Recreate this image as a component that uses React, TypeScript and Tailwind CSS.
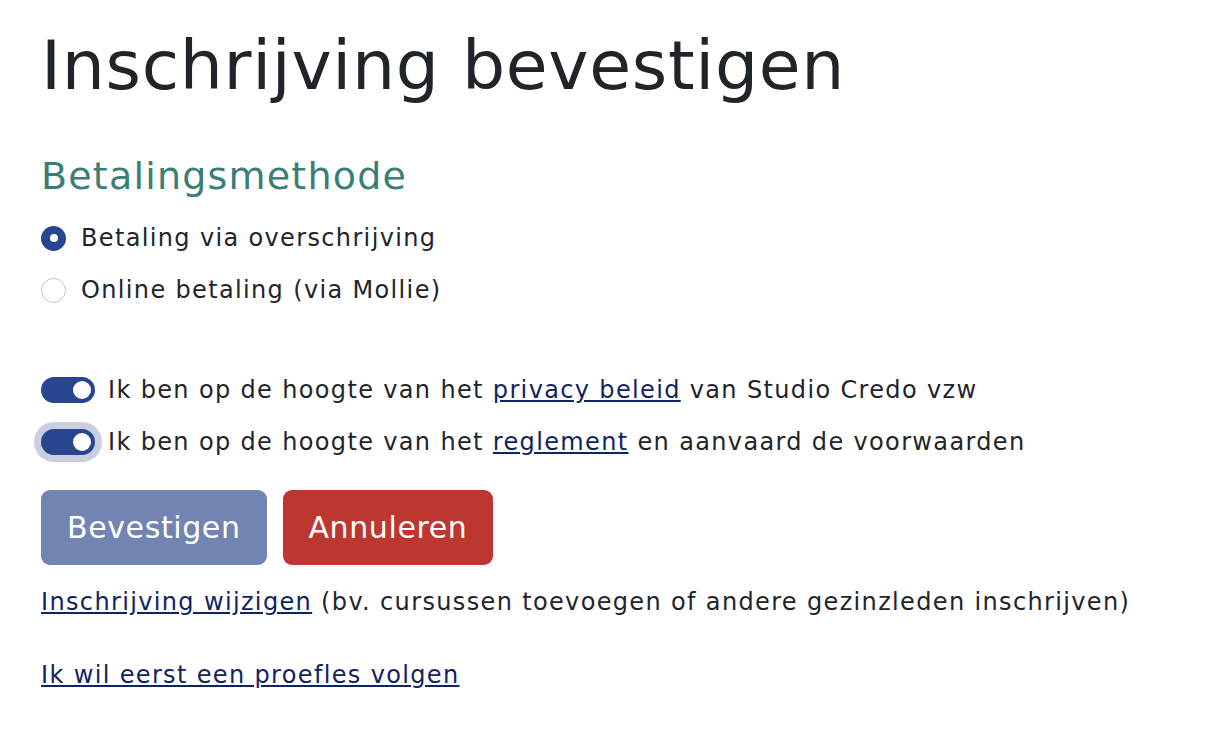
import { useState } from 'react'

const font = { fontFamily: '"DejaVu Sans", "Noto Sans", Arial, sans-serif' }

function Radio({ checked, label }: { checked: boolean; label: string }) {
  return (
    <label className="flex h-[52px] items-center gap-[15px]">
      {checked ? (
        <span className="flex size-[25px] items-center justify-center rounded-full bg-[#284690]">
          <span className="size-[8px] rounded-full bg-white" />
        </span>
      ) : (
        <span className="size-[25px] rounded-full border border-[#c4c4c4] bg-white" />
      )}
      <span>{label}</span>
    </label>
  )
}

function Toggle({ focused }: { focused?: boolean }) {
  return (
    <span
      className={
        'relative inline-block h-[26px] w-[54px] shrink-0 rounded-full bg-[#284690] ' +
        (focused ? 'shadow-[0_0_0_7px_#c9cee1]' : '')
      }
    >
      <span className="absolute right-[4px] top-[4px] size-[18px] rounded-full bg-white" />
    </span>
  )
}

export default function App() {
  const [method] = useState('overschrijving')

  return (
    <div className="min-h-[732px] bg-white px-[41px] text-[24px] tracking-[1.35px] text-[#212529]" style={font}>
      <h1 className="pt-[18px] text-[68px] leading-[96px] tracking-[0.7px]">Inschrijving bevestigen</h1>

      <h3 className="mt-[36px] text-[38px] leading-[52px] tracking-[1.2px] text-[#3a7e78]">Betalingsmethode</h3>

      <div className="mt-[10px] flex flex-col">
        <Radio checked={method === 'overschrijving'} label="Betaling via overschrijving" />
        <Radio checked={method === 'mollie'} label="Online betaling (via Mollie)" />
      </div>

      <div className="mt-[48px] flex flex-col">
        <div className="flex h-[52px] items-center gap-[13px]">
          <Toggle />
          <span>
            Ik ben op de hoogte van het{' '}
            <a href="#" className="text-[#0f2460] underline">privacy beleid</a> van Studio Credo vzw
          </span>
        </div>
        <div className="flex h-[52px] items-center gap-[13px]">
          <Toggle focused />
          <span>
            Ik ben op de hoogte van het{' '}
            <a href="#" className="text-[#0f2460] underline">reglement</a> en aanvaard de voorwaarden
          </span>
        </div>
      </div>

      <div className="mt-[22px] flex gap-[16px]">
        <button className="h-[75px] rounded-[9px] bg-[#7284b1] px-[26px] text-[30px] tracking-[0.6px] text-white">
          Bevestigen
        </button>
        <button className="h-[75px] rounded-[9px] bg-[#be3630] px-[26px] text-[30px] tracking-[0.6px] text-white">
          Annuleren
        </button>
      </div>

      <p className="mt-[11px] flex h-[52px] items-center">
        <span>
          <a href="#" className="text-[#0f2460] underline">Inschrijving wijzigen</a> (bv. cursussen toevoegen of andere gezinzleden inschrijven)
        </span>
      </p>

      <p className="mt-[21px] flex h-[52px] items-center">
        <a href="#" className="text-[#0f2460] underline">Ik wil eerst een proefles volgen</a>
      </p>
    </div>
  )
}
